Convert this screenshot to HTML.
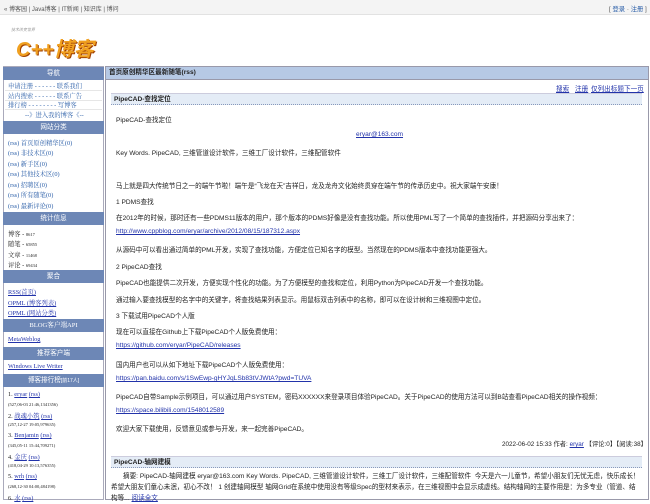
<!DOCTYPE html>
<html><head><meta charset="utf-8"><style>
*{margin:0;padding:0;box-sizing:border-box}
body{width:650px;height:500px;overflow:hidden;background:#fff;font-family:"Liberation Sans","Noto Sans CJK SC",sans-serif;font-size:6.6px;color:#222;position:relative}
.a{position:absolute;white-space:nowrap}
a,.l{color:#2233aa;text-decoration:underline}
.top{position:absolute;left:0;top:0;width:650px;height:15px;background:#f4f4f4;border-bottom:1px solid #e2e2e2}
.side{position:absolute;left:3px;top:66px;width:101px;height:434px;border:1px solid #aab;background:#fff}
.sh{position:absolute;left:3px;width:101px;height:13px;background:#6d87b6;color:#fff;text-align:center;line-height:13px;font-size:6.6px}
.si{position:absolute;left:8px;white-space:nowrap;font-size:6.3px;font-family:"Liberation Serif","Noto Serif CJK SC",serif}
.sep{position:absolute;left:5px;width:97px;height:1px;background:#e6e6e6}
.main{position:absolute;left:105px;top:66px;width:544px;height:434px;border:1px solid #99a}
.mh{position:absolute;left:105px;top:66px;width:544px;height:14px;background:#b6c9e5;border:1px solid #99a;font-weight:bold;line-height:12px;padding-left:3px}
.tb{position:absolute;left:111px;width:531px;height:12px;background:#e4ecf6;border-bottom:1px dotted #8899bb;border-top:1px solid #ccd;font-weight:bold;line-height:11px;padding-left:3px}
.t{position:absolute;left:116px;white-space:nowrap}
</style></head><body>
<div class="top"></div>
<div class="a" style="left:4px;top:4px;color:#555;font-size:6px">« 博客园 | Java博客 | IT新闻 | 知识库 | 博问</div>
<div class="a" style="left:609px;top:4px;color:#555;font-size:6.3px">[ <span style="color:#2a5ea8">登录</span> · <span style="color:#2a5ea8">注册</span> ]</div>
<div class="a" style="left:11px;top:27px;color:#999;font-size:4px;font-style:italic">技术改变世界</div>
<div class="a" style="left:16px;top:33px;font-size:20px;font-weight:bold;font-style:italic;color:#f0a020;text-shadow:1px 1px 0 #a04000">C++博客</div>

<div class="side"></div>
<div class="sh" style="top:67px">导航</div>
<div class="si" style="top:81px;color:#2a5ea8">申请注册 - - - - - - 联系我们</div>
<div class="sep" style="top:90px"></div>
<div class="si" style="top:91px;color:#2a5ea8">站内搜索 - - - - - - 联系广告</div>
<div class="sep" style="top:100px"></div>
<div class="si" style="top:100px;color:#2a5ea8">排行榜 - - - - - - - - 写博客</div>
<div class="sep" style="top:109px"></div>
<div class="si" style="top:110px;left:25px;color:#2a5ea8">--》进入我的博客《--</div>
<div class="sh" style="top:121px">网站分类</div>
<div class="si" style="top:138px;color:#2a5ea8">(rss) 首页原创精华区(0)</div>
<div class="si" style="top:148px;color:#2a5ea8">(rss) 非技术区(0)</div>
<div class="si" style="top:159px;color:#2a5ea8">(rss) 新手区(0)</div>
<div class="si" style="top:169px;color:#2a5ea8">(rss) 其他技术区(0)</div>
<div class="si" style="top:180px;color:#2a5ea8">(rss) 招聘区(0)</div>
<div class="si" style="top:190px;color:#2a5ea8">(rss) 所有随笔(0)</div>
<div class="si" style="top:201px;color:#2a5ea8">(rss) 最新评论(0)</div>
<div class="sh" style="top:212px">统计信息</div>
<div class="si" style="top:229px">博客 - <span style="font-size:4.5px">8617</span></div>
<div class="si" style="top:239px">随笔 - <span style="font-size:4.5px">65855</span></div>
<div class="si" style="top:250px">文章 - <span style="font-size:4.5px">11468</span></div>
<div class="si" style="top:260px">评论 - <span style="font-size:4.5px">69434</span></div>
<div class="sh" style="top:270px">聚合</div>
<div class="si l" style="top:287px">RSS(首页)</div>
<div class="si l" style="top:298px">OPML (博客列表)</div>
<div class="si l" style="top:308px">OPML (网站分类)</div>
<div class="sh" style="top:319px;font-family:'Liberation Serif','Noto Serif CJK SC',serif">BLOG客户端API</div>
<div class="si l" style="top:336px">MetaWeblog</div>
<div class="sh" style="top:347px">推荐客户端</div>
<div class="si l" style="top:363px">Windows Live Writer</div>
<div class="sh" style="top:374px">博客排行榜<span style="font-size:5px">[前17人]</span></div>
<div class="si" style="top:391px">1. <span class="l">eryar</span> <span class="l">(rss)</span></div>
<div class="si" style="top:402px;font-size:4.5px">(527,06-03 21:46,1341356)</div>
<div class="si" style="top:411px">2. <span class="l">战魂小筑</span> <span class="l">(rss)</span></div>
<div class="si" style="top:422px;font-size:4.5px">(257,12-27 19:05,979635)</div>
<div class="si" style="top:432px">3. <span class="l">Benjamin</span> <span class="l">(rss)</span></div>
<div class="si" style="top:443px;font-size:4.5px">(345,05-11 15:44,709271)</div>
<div class="si" style="top:452px">4. <span class="l">金庆</span> <span class="l">(rss)</span></div>
<div class="si" style="top:463px;font-size:4.5px">(418,04-29 10:13,576355)</div>
<div class="si" style="top:473px">5. <span class="l">wrh</span> <span class="l">(rss)</span></div>
<div class="si" style="top:484px;font-size:4.5px">(268,12-30 04:00,484198)</div>
<div class="si" style="top:493px">6. <span class="l">水</span> <span class="l">(rss)</span></div>

<div class="main"></div>
<div class="mh">首页原创精华区最新随笔(rss)</div>
<div class="a l" style="left:556px;top:83px">搜索</div>
<div class="a l" style="left:575px;top:83px">注册</div>
<div class="a l" style="left:591px;top:83px">仅列出标题</div>
<div class="a l" style="left:624px;top:83px">下一页</div>
<div class="tb" style="top:93px">PipeCAD-查找定位</div>
<div class="t" style="top:114px">PipeCAD-查找定位</div>
<div class="a l" style="left:356px;top:131px">eryar@163.com</div>
<div class="t" style="top:147px">Key Words. PipeCAD, 三维管道设计软件，三维工厂设计软件，三维配管软件</div>
<div class="t" style="top:180px">马上就是四大传统节日之一的端午节啦！端午是“飞龙在天”吉祥日，龙及龙舟文化始终贯穿在端午节的传承历史中。祝大家端午安康！</div>
<div class="t" style="top:196px">1 PDMS查找</div>
<div class="t" style="top:212px">在2012年的时候，那时还有一些PDMS11版本的用户，那个版本的PDMS好像是没有查找功能。所以使用PML写了一个简单的查找插件，并把源码分享出来了：</div>
<div class="t l" style="top:228px">http://www.cppblog.com/eryar/archive/2012/08/15/187312.aspx</div>
<div class="t" style="top:244px">从源码中可以看出通过简单的PML开发，实现了查找功能，方便定位已知名字的模型。当然现在的PDMS版本中查找功能更强大。</div>
<div class="t" style="top:261px">2 PipeCAD查找</div>
<div class="t" style="top:277px">PipeCAD也能提供二次开发，方便实现个性化的功能。为了方便模型的查找和定位，利用Python为PipeCAD开发一个查找功能。</div>
<div class="t" style="top:294px">通过输入要查找模型的名字中的关键字，将查找结果列表显示。用鼠标双击列表中的名称，即可以在设计树和三维视图中定位。</div>
<div class="t" style="top:310px">3 下载试用PipeCAD个人版</div>
<div class="t" style="top:326px">现在可以直接在Github上下载PipeCAD个人版免费使用：</div>
<div class="t l" style="top:342px">https://github.com/eryar/PipeCAD/releases</div>
<div class="t" style="top:359px">国内用户也可以从如下地址下载PipeCAD个人版免费使用：</div>
<div class="t l" style="top:375px">https://pan.baidu.com/s/1SwEwp-gHYJqLSb83tVJWtA?pwd=TUVA</div>
<div class="t" style="top:391px">PipeCAD自带Sample示例项目，可以通过用户SYSTEM，密码XXXXXX来登录项目体验PipeCAD。关于PipeCAD的使用方法可以到B站查看PipeCAD相关的操作视频：</div>
<div class="t l" style="top:407px">https://space.bilibili.com/1548012589</div>
<div class="t" style="top:423px">欢迎大家下载使用，反馈意见或参与开发，来一起完善PipeCAD。</div>
<div class="a" style="left:502px;top:439px;font-size:6.3px">2022-06-02 15:33 作者: <span class="l">eryar</span> 【评论:0】【阅读:38】</div>
<div class="tb" style="top:456px">PipeCAD-轴网建模</div>
<div class="t" style="top:471px;left:111px;width:531px;white-space:normal;line-height:11px;text-indent:12px">摘要: PipeCAD-轴网建模 eryar@163.com Key Words. PipeCAD, 三维管道设计软件，三维工厂设计软件，三维配管软件 &nbsp;今天是六一儿童节，希望小朋友们无忧无虑，快乐成长！希望大朋友们童心未泯，初心不改！ 1 创建轴网模型 轴网Grid在系统中使用没有等级Spec的型材来表示，在三维视图中会显示成虚线。结构轴网的主要作用是：为多专业（管道、结构等... <span class="l">阅读全文</span></div>
</body></html>
